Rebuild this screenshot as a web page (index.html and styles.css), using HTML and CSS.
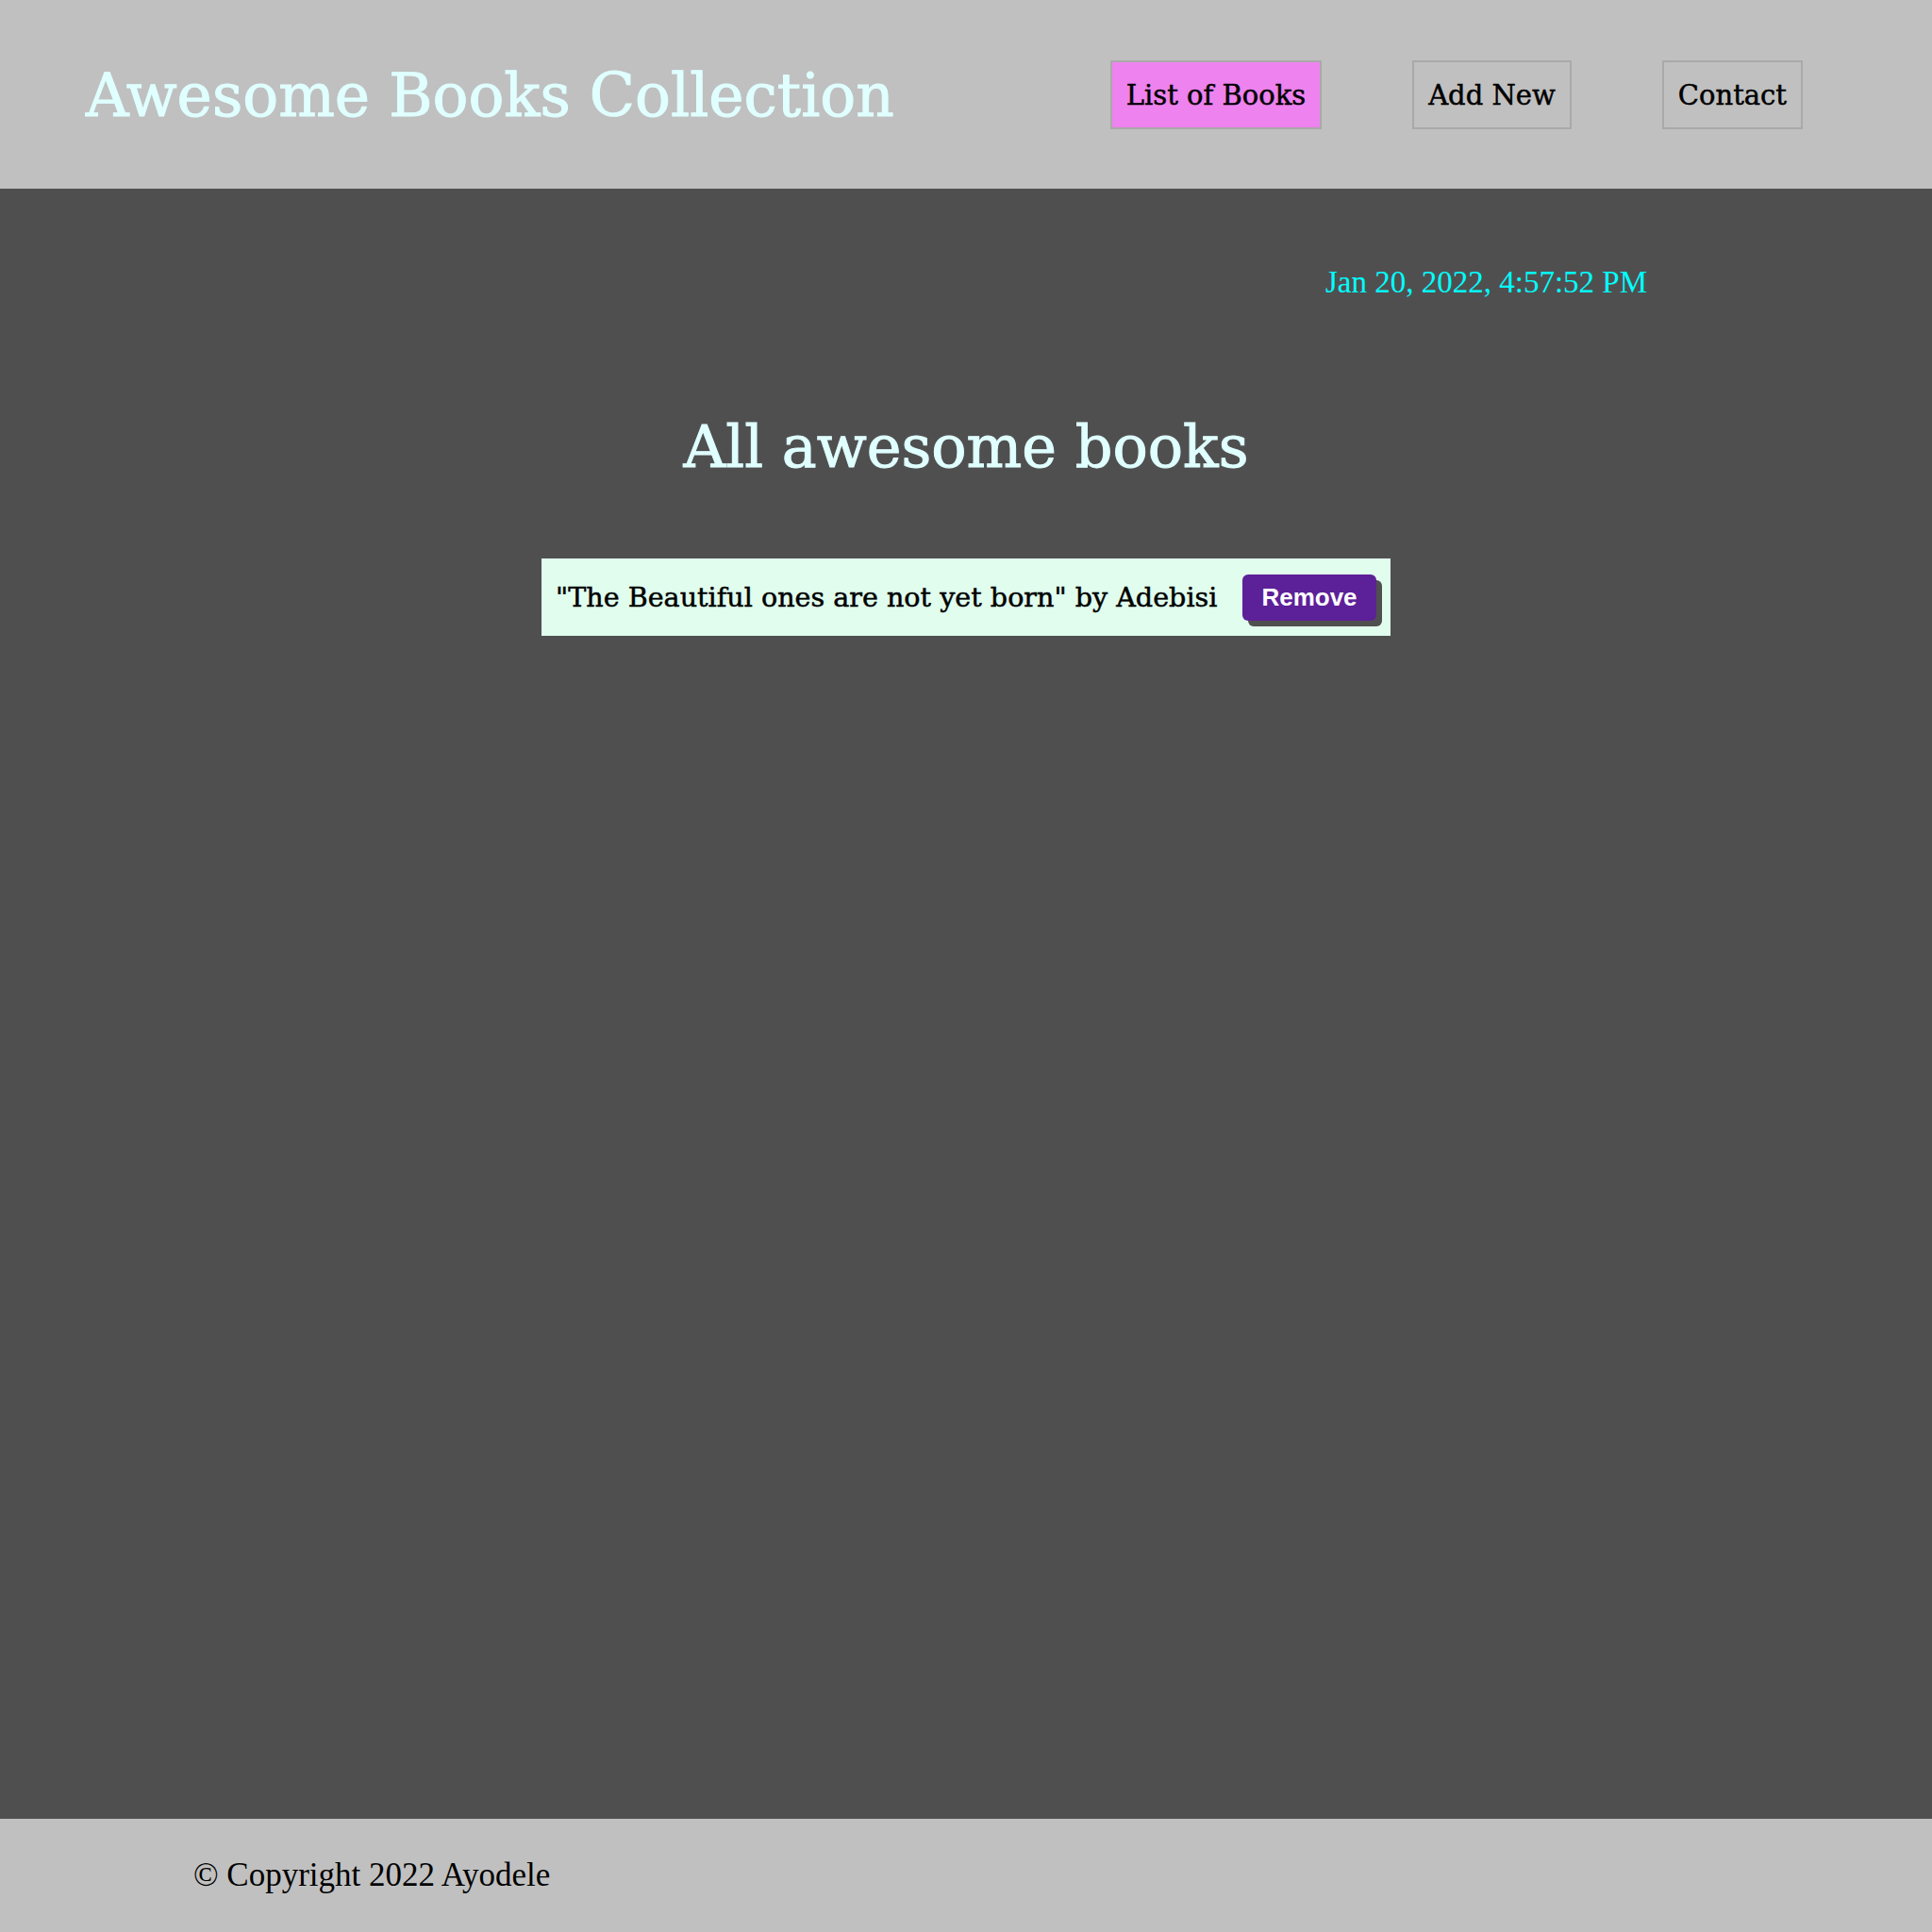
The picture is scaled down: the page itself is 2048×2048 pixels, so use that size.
FILE: index.html
```html
<!DOCTYPE html>
<html lang="en">
<head>
<meta charset="utf-8">
<title>Awesome Books</title>
<link rel="stylesheet" href="styles.css">
</head>
<body>
<header class="site-header">
  <h1 class="brand">Awesome Books Collection</h1>
  <nav>
    <ul class="nav-list">
      <li><a class="nav-link active" href="#">List of Books</a></li>
      <li><a class="nav-link" href="#">Add New</a></li>
      <li><a class="nav-link" href="#">Contact</a></li>
    </ul>
  </nav>
</header>
<main class="content">
  <p class="date">Jan 20, 2022, 4:57:52 PM</p>
  <h2 class="section-title">All awesome books</h2>
  <ul class="book-list">
    <li class="book">
      <span class="book-text">"The Beautiful ones are not yet born" by Adebisi</span>
      <button class="remove-btn" type="button">Remove</button>
    </li>
  </ul>
</main>
<footer class="site-footer">
  <p class="copyright">© Copyright 2022 Ayodele</p>
</footer>
</body>
</html>
```
FILE: styles.css
```css
* { box-sizing: border-box; }
html, body { margin: 0; padding: 0; }
body {
  min-height: 100vh;
  display: flex;
  flex-direction: column;
  font-family: "DejaVu Serif", serif;
  background: #504f50;
}
.site-header {
  height: 200px;
  background: #c0c0c0;
  display: flex;
  align-items: center;
  justify-content: space-between;
  padding: 0 137px 0 91px;
}
.brand {
  margin: 0;
  padding-top: 3px;
  font-size: 63px;
  font-weight: normal;
  color: #e0ffff;
  line-height: 1;
  -webkit-text-stroke: 1px #e0ffff;
}
.nav-list {
  list-style: none;
  margin: 0;
  padding: 0;
  display: flex;
  gap: 96px;
}
.nav-link {
  display: block;
  height: 73px;
  line-height: 71px;
  padding: 0 15px;
  border: 2px solid #a9a9a9;
  color: #000;
  text-decoration: none;
  font-size: 29px;
  -webkit-text-stroke: 0.5px #000;
}
.nav-link.active { background: #ee82ee; }
.content {
  flex: 1;
  display: flex;
  flex-direction: column;
  align-items: center;
}
.date {
  align-self: stretch;
  margin: 0;
  padding: 80px 302px 0 0;
  text-align: right;
  font-family: "Liberation Serif", serif;
  font-size: 33px;
  line-height: 38px;
  color: #00ffff;
}
.section-title {
  margin: 119px 0 0;
  font-size: 62px;
  line-height: 74px;
  font-weight: normal;
  color: #e0ffff;
  -webkit-text-stroke: 1px #e0ffff;
}
.book-list {
  list-style: none;
  margin: 81px 0 0;
  padding: 0;
}
.book {
  width: 900px;
  height: 82px;
  background: #e0fdee;
  display: flex;
  align-items: center;
  justify-content: space-between;
  padding: 0 15px;
}
.book-text {
  font-size: 28.6px;
  color: #000;
  -webkit-text-stroke: 0.5px #000;
}
.remove-btn {
  width: 142px;
  height: 49px;
  border: none;
  border-radius: 6px;
  background: #5c2098;
  color: #fff;
  font-family: "Liberation Sans", Arial, sans-serif;
  font-weight: bold;
  font-size: 26px;
  box-shadow: 6px 6px 0 #4f4f4f;
  padding: 0;
}
.site-footer {
  height: 120px;
  background: #c0c0c0;
  display: flex;
  align-items: center;
  padding-left: 205px;
}
.copyright {
  margin: 0;
  font-family: "Liberation Serif", serif;
  font-size: 35px;
  color: #000;
}
```
